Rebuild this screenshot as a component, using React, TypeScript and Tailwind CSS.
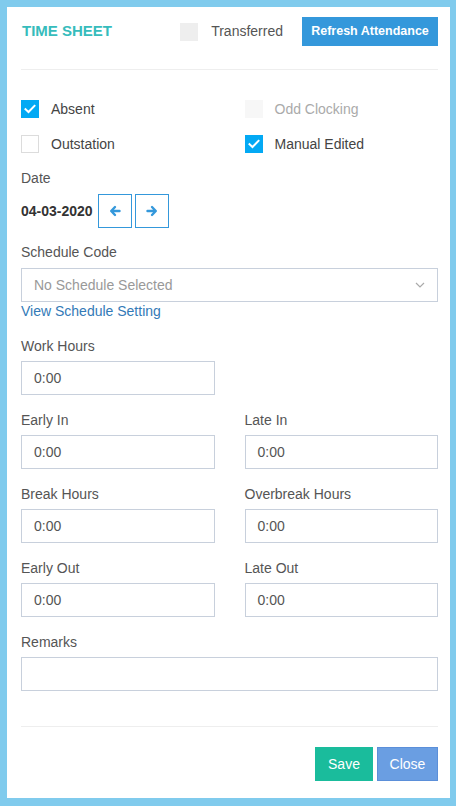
import React from "react";

const Check = () => (
  <svg width="12" height="10" viewBox="0 0 12 10" fill="none">
    <path d="M1.5 5.2 L4.5 8 L10.5 1.8" stroke="white" strokeWidth="2" strokeLinecap="square" />
  </svg>
);

const Box = ({ checked, disabled }: { checked?: boolean; disabled?: boolean }) => (
  <div
    className={
      "w-[18px] h-[18px] flex items-center justify-center shrink-0 " +
      (checked
        ? "bg-[#03a9f4]"
        : disabled
        ? "bg-[#f7f7f7]"
        : "bg-white border border-[#dcdcdc]")
    }
  >
    {checked && <Check />}
  </div>
);

const Arrow = ({ dir }: { dir: "l" | "r" }) => (
  <svg width="12" height="12" viewBox="0 0 12 12" fill="none">
    {dir === "l" ? (
      <path d="M6 2 L2.2 6 L6 10 M2.5 6 H10.5" stroke="#3498db" strokeWidth="2.4" strokeLinecap="round" strokeLinejoin="round" />
    ) : (
      <path d="M6 2 L9.8 6 L6 10 M9.5 6 H1.5" stroke="#3498db" strokeWidth="2.4" strokeLinecap="round" strokeLinejoin="round" />
    )}
  </svg>
);

const Field = ({ label, value = "0:00" }: { label: string; value?: string }) => (
  <div className="flex flex-col">
    <div className="h-[20px] leading-[20px] text-[14px] text-[#555] mb-[5px]">{label}</div>
    <div className="h-[34px] border border-[#c8d0dc] flex items-center px-[12px] text-[14px] text-[#555]">{value}</div>
  </div>
);

export default function App() {
  return (
    <div
      className="w-[456px] h-[806px] bg-[#80cbed] pt-[7px] pl-[7px] pr-[6px] pb-[8px]"
      style={{ fontFamily: '"Liberation Sans", Arial, sans-serif' }}
    >
      <div className="bg-white h-full pl-[14px] pr-[12px] pt-[10px] flex flex-col">
        {/* Header */}
        <div className="flex items-center h-[29px]">
          <div className="text-[15px] font-bold text-[#36bcbc] flex-1 pl-[1px] -mt-[1px]">TIME SHEET</div>
          <div className="w-[18px] h-[18px] bg-[#eeeeee] mr-[13px]"></div>
          <div className="text-[14px] text-[#555] mr-[19px] -mt-[1px]">Transferred</div>
          <div className="h-[29px] w-[136px] bg-[#3498db] text-white text-[12.5px] font-bold flex items-center justify-center">
            Refresh Attendance
          </div>
        </div>
        <div className="h-px bg-[#eeeeee] mt-[23px]"></div>

        {/* Checkboxes */}
        <div className="grid grid-cols-2 gap-x-[30px] gap-y-[17px] mt-[30px]">
          <div className="flex items-center gap-[12px] h-[18px]">
            <Box checked />
            <span className="text-[14px] text-[#444]">Absent</span>
          </div>
          <div className="flex items-center gap-[12px] h-[18px]">
            <Box disabled />
            <span className="text-[14px] text-[#aaa]">Odd Clocking</span>
          </div>
          <div className="flex items-center gap-[12px] h-[18px]">
            <Box />
            <span className="text-[14px] text-[#444]">Outstation</span>
          </div>
          <div className="flex items-center gap-[12px] h-[18px]">
            <Box checked />
            <span className="text-[14px] text-[#444]">Manual Edited</span>
          </div>
        </div>

        {/* Date */}
        <div className="h-[20px] leading-[20px] text-[14px] text-[#555] mt-[15px]">Date</div>
        <div className="flex items-center mt-[6px] h-[34px]">
          <span className="text-[14px] font-bold text-[#333] mr-[5px]">04-03-2020</span>
          <div className="w-[34px] h-[34px] border border-[#3498db] flex items-center justify-center">
            <Arrow dir="l" />
          </div>
          <div className="w-[34px] h-[34px] border border-[#3498db] flex items-center justify-center ml-[3px]">
            <Arrow dir="r" />
          </div>
        </div>

        {/* Schedule */}
        <div className="h-[20px] leading-[20px] text-[14px] text-[#555] mt-[14px] mb-[6px]">Schedule Code</div>
        <div className="h-[34px] border border-[#c8d0dc] flex items-center justify-between pl-[12px] pr-[12px] text-[14px] text-[#999]">
          <span>No Schedule Selected</span>
          <svg width="10" height="6" viewBox="0 0 10 6" fill="none">
            <path d="M1 1 L5 5 L9 1" stroke="#aaa" strokeWidth="1.2" />
          </svg>
        </div>
        <div className="h-[18px] leading-[18px] text-[14px] text-[#337ab7]">View Schedule Setting</div>

        {/* Work Hours */}
        <div className="mt-[16px] grid grid-cols-2 gap-x-[30px]">
          <Field label="Work Hours" />
        </div>

        <div className="mt-[15px] grid grid-cols-2 gap-x-[30px] gap-y-[15px]">
          <Field label="Early In" />
          <Field label="Late In" />
          <Field label="Break Hours" />
          <Field label="Overbreak Hours" />
          <Field label="Early Out" />
          <Field label="Late Out" />
        </div>

        <div className="mt-[15px]">
          <Field label="Remarks" value="" />
        </div>

        <div className="h-px bg-[#eeeeee] mt-[35px]"></div>

        <div className="flex justify-end gap-[4px] mt-[20px]">
          <div className="h-[34px] w-[58px] bg-[#1abc9c] text-white text-[14px] flex items-center justify-center">Save</div>
          <div className="h-[34px] w-[61px] bg-[#6a9ee2] border border-[#5b8fd9] text-white text-[14px] flex items-center justify-center">Close</div>
        </div>
      </div>
    </div>
  );
}
